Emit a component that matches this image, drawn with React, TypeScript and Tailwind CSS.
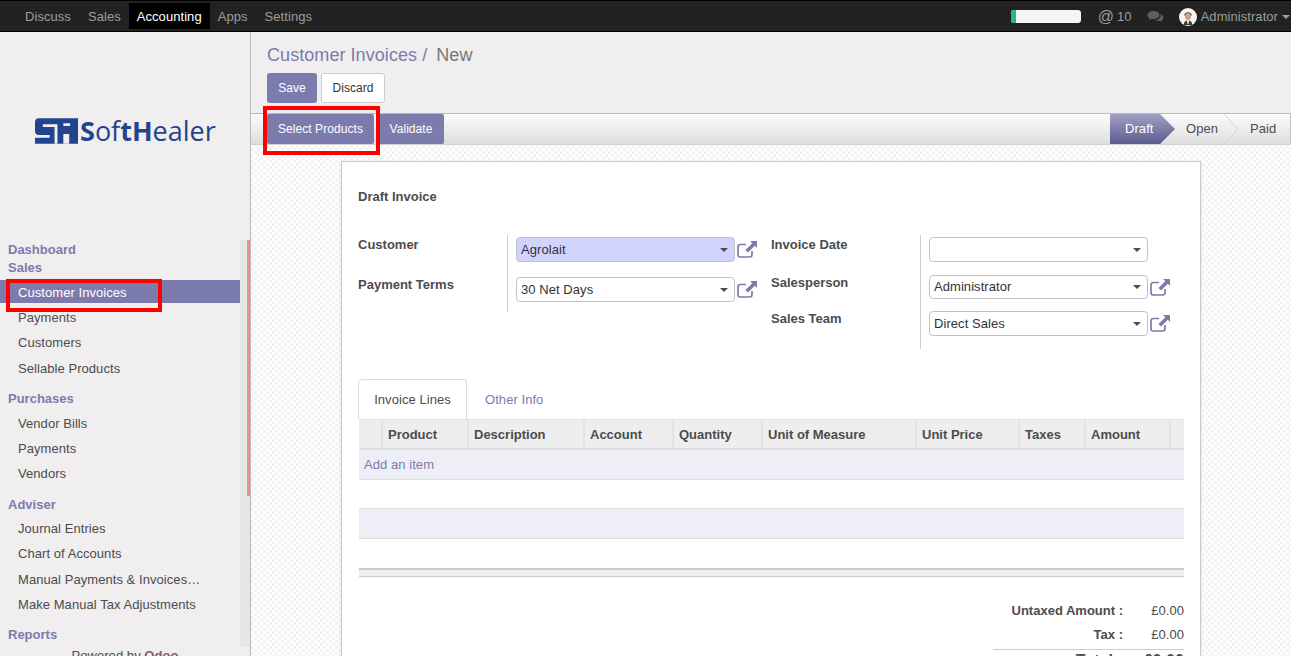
const purple = "text-[#7c7bad]";

function LinkIcon() {
  return (
    <svg width="20" height="17" viewBox="0 0 20 17" className="shrink-0">
      <path
        d="M9 3.500H3.200A2.200 2.200 0 0 0 1 5.700V13.800A2.200 2.200 0 0 0 3.200 16H12.800A2.200 2.200 0 0 0 15 13.800V10"
        fill="none"
        stroke="#7c7bad"
        strokeWidth="1.7"
      />
      <path fill="#7c7bad" d="M13 0H20V7L17.800 4.800L11 11.500L8.500 9L15.300 2.300Z" />
    </svg>
  );
}

function Select({ value, tint, short }: { value?: string; tint?: boolean; short?: boolean }) {
  return (
    <div
      className={`flex w-[219px] items-center justify-between rounded border border-[#c2c2c8] pl-1 pr-[6px] text-[13px] text-[#333] ${
        short ? "h-[24px]" : "h-[25px]"
      } ${tint ? "bg-[#d2d2ff]" : "bg-white"}`}
    >
      <span>{value}</span>
      <span className="h-0 w-0 border-x-4 border-t-4 border-x-transparent border-t-[#4c4c4c]" />
    </div>
  );
}

function Field({ value, tint, short, link = true }: { value?: string; tint?: boolean; short?: boolean; link?: boolean }) {
  return (
    <div className="flex items-center gap-[2px]">
      <Select value={value} tint={tint} short={short} />
      {link && <LinkIcon />}
    </div>
  );
}

function Label({ children }: { children: string }) {
  return <div className="text-[13px] font-bold tracking-normal text-[#4c4c4c]">{children}</div>;
}

function SideItem({ label, active, mt }: { label: string; active?: boolean; mt?: string }) {
  return (
    <div
      className={`flex h-[23px] items-center pl-[18px] pt-[2px] text-[13px] ${mt ?? ""} ${
        active ? "bg-[#7c7bad] text-white" : "text-[#4c4c4c]"
      }`}
    >
      <span className="truncate">{label}</span>
    </div>
  );
}

function SideHead({ label, mt }: { label: string; mt?: string }) {
  return (
    <div className={`h-[18px] pl-2 text-[13px] font-bold leading-[18px] tracking-normal ${purple} ${mt ?? ""}`}>{label}</div>
  );
}

function Logo() {
  return (
    <div className="flex items-center gap-[2px]">
      <svg width="43" height="26" viewBox="0 0 44 26">
        <path fill="#22448f" d="M4 0H44V26H0V20H15V17H4Q0 17 0 13V4Q0 0 4 0Z" />
        <path fill="#f0eeee" d="M8 6H23V9H8ZM20 6H23V26H20ZM29 16H35V26H29ZM29 5H36V8H29Z" />
      </svg>
      <span
        className="text-[27px] leading-none tracking-normal text-[#22448f]"
        style={{ fontFamily: '"Open Sans", sans-serif' }}
      >
        <b>S</b>of<span className="font-bold">t</span>
        <b>H</b>ealer
      </span>
    </div>
  );
}

function Sidebar() {
  return (
    <aside className="flex h-full w-[251px] shrink-0 flex-col overflow-hidden border-r border-[#b8b8b8] bg-[#f0eeee]">
      <div className="flex h-[208px] shrink-0 flex-col pl-[35px] pt-[85px]">
        <Logo />
      </div>
      <div className="flex min-h-0 flex-1">
        <nav className="w-[240px] shrink-0 pt-[1px]">
          <SideHead label="Dashboard" />
          <SideHead label="Sales" />
          <div className="mt-[3px]">
            <SideItem label="Customer Invoices" active />
            <SideItem label="Payments" mt="mt-[2px]" />
            <SideItem label="Customers" mt="mt-[2px]" />
            <SideItem label="Sellable Products" mt="mt-[3px]" />
          </div>
          <SideHead label="Purchases" mt="mt-[11px]" />
          <div className="mt-[3px]">
            <SideItem label="Vendor Bills" />
            <SideItem label="Payments" mt="mt-[2px]" />
            <SideItem label="Vendors" mt="mt-[2px]" />
          </div>
          <SideHead label="Adviser" mt="mt-[12px]" />
          <div className="mt-[2px]">
            <SideItem label="Journal Entries" />
            <SideItem label="Chart of Accounts" mt="mt-[2px]" />
            <SideItem label="Manual Payments & Invoices…" mt="mt-[3px]" />
            <SideItem label="Make Manual Tax Adjustments" mt="mt-[2px]" />
          </div>
          <SideHead label="Reports" mt="mt-[11px]" />
          <div className="mt-[4px] pl-[10px] text-center text-[13px] leading-[15px] text-[#4c4c4c]">
            Powered by <b className="text-[#875a7b]">Odoo</b>
          </div>
        </nav>
        <div className="flex h-[407px] w-[10px] shrink-0 justify-end bg-[#e6e6e6]">
          <div className="h-[256px] w-[3px] bg-[#f09276]" />
        </div>
      </div>
    </aside>
  );
}

function TopBar() {
  return (
    <header className="flex h-[32px] shrink-0 items-center justify-between border-y border-black bg-[#222] pl-[16px] pr-[1px] text-[13px] text-[#9d9d9d]">
      <div className="flex h-full items-center">
        <span className="px-[9px] pt-[1px]">Discuss</span>
        <span className="ml-[1px] px-[7px] pt-[1px]">Sales</span>
        <span className="ml-[1px] flex h-[26px] items-center bg-black px-[8px] pt-[1px] text-white">Accounting</span>
        <span className="px-[8px] pt-[1px]">Apps</span>
        <span className="px-[9px] pt-[1px]">Settings</span>
      </div>
      <div className="flex items-center pt-[1px]">
        <div className="h-[13px] w-[70px] overflow-hidden rounded-[3px] bg-[#f5f5f5]">
          <div className="h-full w-[5px] bg-[#21b799]" />
        </div>
        <span className="ml-[17px] text-[16px] leading-none">@</span>
        <span className="ml-[3px]">10</span>
        <svg width="17" height="14" viewBox="0 0 17 14" className="ml-[15px]" fill="#5f5f5f">
          <path d="M6.500 1C10 1 12.500 2.800 12.500 5S10 9 6.500 9C5.800 9 5.200 9 4.600 8.800L1.800 10.400 2.500 8C1.200 7.300.5 6.200.5 5 .5 2.800 3 1 6.500 1Z" />
          <path d="M13.600 4.200C15.400 4.800 16.500 6 16.500 7.400 16.500 8.500 15.800 9.400 14.800 10L15.300 12 13 10.800C11.500 11.100 9.600 10.800 8.400 10 11.500 9.800 14.200 8 13.600 4.200Z" />
        </svg>
        <svg width="18" height="18" viewBox="0 0 18 18" className="ml-[15px]">
          <circle cx="9" cy="9" r="9" fill="#f7f4f1" />
          <path fill="#5a524c" d="M5.500 6.500C5.500 3.500 12.500 3.500 12.500 6.500V8H5.500Z" />
          <ellipse cx="9" cy="8.500" rx="3" ry="3.600" fill="#cf9c84" />
          <path fill="#3f3b3d" d="M5 15C6 12.800 7.500 12.500 9 13 10.500 12.500 12 12.800 13 15V17H5Z" />
          <path fill="#fff" d="M8 12.500H10L9.500 16H8.500Z" />
        </svg>
        <span className="ml-[4px]">Administrator</span>
        <span className="ml-[4px] h-0 w-0 border-x-4 border-t-4 border-x-transparent border-t-[#9d9d9d]" />
      </div>
    </header>
  );
}

function StatusBar() {
  return (
    <div className="flex h-[30px] w-[181px] items-stretch border-r border-[#c4c4c4]">
      <div className="flex w-[65px] shrink-0 items-center bg-linear-to-b from-[#a3a1c4] to-[#5c5a8f] pl-[15px] text-white [clip-path:polygon(0_0,77%_0,100%_50%,77%_100%,0_100%)]">
        Draft
      </div>
      <div className="flex w-[49px] shrink-0 items-center pl-[11px] text-[#4c4c4c]">Open</div>
      <svg width="15" height="30" viewBox="0 0 15 30" className="shrink-0">
        <path d="M0 0L14 15L0 30" fill="none" stroke="#d4d4d4" />
      </svg>
      <div className="flex flex-1 items-center pl-[11px] text-[#4c4c4c]">Paid</div>
    </div>
  );
}

const columns = [
  { label: "", w: "w-[24px]" },
  { label: "Product", w: "w-[86px]" },
  { label: "Description", w: "w-[116px]" },
  { label: "Account", w: "w-[89px]" },
  { label: "Quantity", w: "w-[89px]" },
  { label: "Unit of Measure", w: "w-[154px]" },
  { label: "Unit Price", w: "w-[103px]" },
  { label: "Taxes", w: "w-[66px]" },
  { label: "Amount", w: "w-[85px]" },
  { label: "", w: "flex-1" },
];

function InvoiceLines() {
  return (
    <div>
      <div className="flex h-[40px] text-[13px]">
        <div className="flex w-[109px] items-center justify-center rounded-t border-x border-t border-[#ddd] bg-white text-[#4c4c4c]">
          Invoice Lines
        </div>
        <div className={`ml-[18px] flex items-center pt-[1px] ${purple}`}>Other Info</div>
      </div>
      <div className="ml-[1px] flex h-[31px] border-y border-b-2 border-[#e0e0e0] bg-[#eee]">
        {columns.map((c, i) => (
          <div
            key={i}
            className={`flex items-center border-r-2 border-[#e4e4e4] pl-[5px] pt-[1px] text-[13px] font-bold tracking-normal text-[#4c4c4c] last:border-r-0 ${c.w}`}
          >
            {c.label}
          </div>
        ))}
      </div>
      <div className={`ml-[1px] flex h-[30px] items-center border-b border-[#ddd] bg-[#eeeef6] pl-[5px] text-[13px] ${purple}`}>
        Add an item
      </div>
      <div className="ml-[1px] h-[29px] border-b border-[#ddd] bg-white" />
      <div className="ml-[1px] h-[30px] border-b border-[#ddd] bg-[#eeeef6]" />
      <div className="ml-[1px] h-[29px] bg-white" />
      <div className="ml-[1px] h-[9px] border-t-2 border-b border-[#ccc] bg-[#eee]" />
    </div>
  );
}

function Totals() {
  return (
    <div className="ml-auto mt-[22px] w-[191px] text-[13px] text-[#4c4c4c]">
      <div className="flex h-[24px] items-center justify-end">
        <b className="whitespace-nowrap tracking-normal">Untaxed Amount :</b>
        <span className="w-[61px] text-right">£0.00</span>
      </div>
      <div className="flex h-[24px] items-center justify-end">
        <b className="tracking-normal">Tax :</b>
        <span className="w-[61px] text-right">£0.00</span>
      </div>
      <div className="mt-[2px] flex h-[22px] items-center justify-end border-t border-[#ccc] text-[16px]">
        <b>Total :</b>
        <b className="w-[61px] text-right">£0.00</b>
      </div>
    </div>
  );
}

function Sheet() {
  return (
    <div className="mx-auto mt-[16px] h-[600px] w-[860px] shrink-0 border border-[#c8c8d4] bg-white px-[16px] pt-[27px] shadow-sm">
      <div className="text-[13px] font-bold leading-[16px] tracking-normal text-[#4c4c4c]">Draft Invoice</div>
      <div className="mt-[30px] flex">
        <div className="w-[149px] shrink-0">
          <div className="h-[40px]">
            <Label>Customer</Label>
          </div>
          <Label>Payment Terms</Label>
        </div>
        <div className="flex h-[77px] w-[264px] shrink-0 flex-col gap-[15px] border-l border-[#ccc] pl-[8px] pt-[2px]">
          <Field value="Agrolait" tint />
          <Field value="30 Net Days" />
        </div>
        <div className="w-[149px] shrink-0">
          <div className="h-[38px]">
            <Label>Invoice Date</Label>
          </div>
          <div className="h-[36px]">
            <Label>Salesperson</Label>
          </div>
          <Label>Sales Team</Label>
        </div>
        <div className="flex h-[114px] flex-1 flex-col border-l border-[#ccc] pl-[8px] pt-[2px]">
          <Field link={false} />
          <div className="mt-[13px] flex flex-col gap-[12px]">
            <Field value="Administrator" short />
            <Field value="Direct Sales" />
          </div>
        </div>
      </div>
      <div className="mt-[30px]">
        <InvoiceLines />
      </div>
      <Totals />
    </div>
  );
}

export default function App() {
  return (
    <div
      className="flex h-[656px] w-[1291px] flex-col overflow-hidden text-[13px] tracking-[0.06px]"
      style={{ fontFamily: '"Liberation Sans", Arial, sans-serif' }}
    >
      <TopBar />
      <div className="flex min-h-0 flex-1">
        <div className="relative">
          <Sidebar />
          <div className="absolute left-[6px] top-[247px] h-[33px] w-[156px] border-[4px] border-[#f00]" />
        </div>
        <main className="relative flex min-w-0 flex-1 flex-col overflow-hidden bg-[#f0eeee]">
          <div className="h-[81px] shrink-0 pl-[16px] pt-[12px]">
            <div className="text-[18px] leading-[22px] text-[#777]">
              <span className={purple}>Customer Invoices</span>
              <span className={purple}> / </span>
              <span className="ml-[4px]">New</span>
            </div>
            <div className="mt-[7px] flex gap-[4px] text-[12px]">
              <div className="flex h-[30px] w-[50px] items-center justify-center rounded-[3px] bg-[#7c7bad] text-white">Save</div>
              <div className="flex h-[30px] w-[64px] items-center justify-center rounded-[3px] border border-[#ccc] bg-white text-[#333]">Discard</div>
            </div>
          </div>
          <div className="flex h-[32px] shrink-0 justify-between border-y border-t-[#b8b8b8] border-b-[#d0d0d0] bg-linear-to-b from-[#fcfcfc] to-[#dedede] pl-[16px] text-[13px]">
            <div className="flex gap-[4px] text-[12px] text-white">
              <div className="flex h-[30px] w-[107px] items-center justify-center rounded-[2px] bg-[#7c7bad]">Select Products</div>
              <div className="flex h-[30px] w-[66px] items-center justify-center rounded-[2px] bg-[#7c7bad]">Validate</div>
            </div>
            <StatusBar />
          </div>
          <div className="min-h-0 flex-1 overflow-hidden bg-[repeating-conic-gradient(#f2f2f2_0_25%,#fff_0_50%)] bg-[length:6px_6px]">
            <Sheet />
          </div>
          <div className="absolute left-[12px] top-[74px] h-[49px] w-[117px] border-[4px] border-[#f00]" />
        </main>
      </div>
    </div>
  );
}
